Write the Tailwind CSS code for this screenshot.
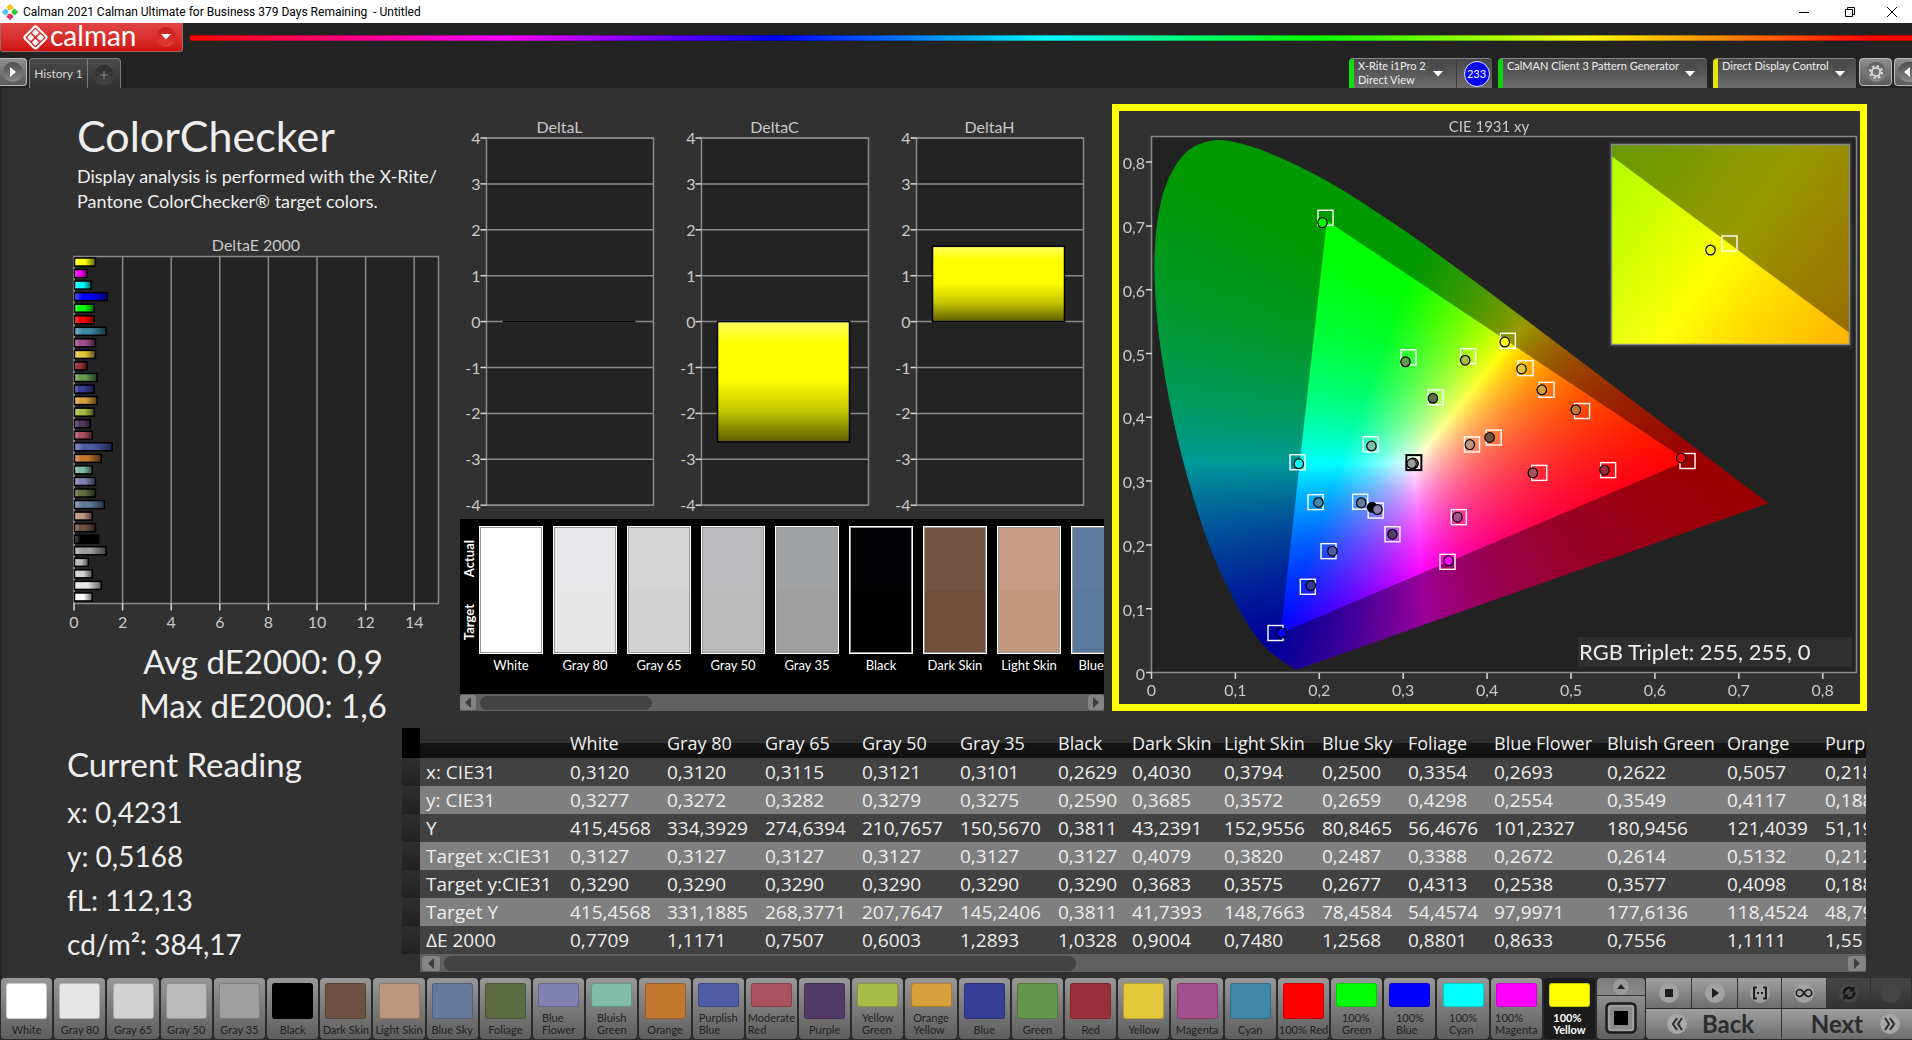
<!DOCTYPE html>
<html lang="en">
<head>
    <meta charset="UTF-8">
    <meta name="viewport" content="width=device-width, initial-scale=1.0">
    <title>Calman 2021 Calman Ultimate for Business 379 Days Remaining - Untitled</title>
    <script src="https://cdn.jsdelivr.net/npm/@tailwindcss/browser@4"></script>
</head>
<body class="min-h-screen flex flex-col overflow-x-hidden bg-[#313131] font-[Lato,sans-serif] text-[#eeeeee]">

    <!-- window title bar -->
    <div class="h-[23px] bg-white text-black flex items-center pl-[2px] shrink-0">
        <svg class="w-4 h-4" viewBox="0 0 16 16">
            <rect x="5.3" y="0.8" width="5.4" height="5.4" rx="1" transform="rotate(45 8 3.5)" fill="#f3c614"/>
            <rect x="0.8" y="5.3" width="5.4" height="5.4" rx="1" transform="rotate(45 3.5 8)" fill="#56c4ee"/>
            <rect x="9.8" y="5.3" width="5.4" height="5.4" rx="1" transform="rotate(45 12.5 8)" fill="#35c435"/>
            <rect x="5.3" y="9.8" width="5.4" height="5.4" rx="1" transform="rotate(45 8 12.5)" fill="#e8305c"/>
            <path d="M8 5.8 10.2 8 8 10.2 5.8 8Z" fill="#fff"/>
        </svg>
        <span class="ml-[5px] text-[12px] font-[Roboto,sans-serif] whitespace-pre">Calman 2021 Calman Ultimate for Business 379 Days Remaining  - Untitled</span>
        <div class="ml-auto flex">
            <button aria-label="Minimize" class="w-[46px] h-[23px] flex items-center justify-center"><svg width="10" height="10"><path d="M0 5.5H10" stroke="#000"/></svg></button>
            <button aria-label="Restore" class="w-[45px] h-[23px] flex items-center justify-center"><svg width="10" height="10" fill="none" stroke="#000"><path d="M.5 2.5h7v7h-7zM2.5 2.5v-2h7v7h-2"/></svg></button>
            <button aria-label="Close" class="w-[40px] h-[23px] flex items-center justify-center"><svg width="10" height="10"><path d="M0 0 10 10M10 0 0 10" stroke="#000"/></svg></button>
        </div>
    </div>

    <header class="bg-[#232323] shrink-0">
        <div class="flex h-[29px]">
            <button class="w-[183px] shrink-0 flex items-center pl-[22px] rounded-b-[3px] border border-t-0 border-[#a06a6a] bg-linear-to-b from-[#e04545] to-[#d01010] text-white">
                <svg class="w-[25px] h-[25px]" viewBox="0 0 24 24" fill="none">
                    <rect x="4" y="4" width="16" height="16" rx="2" transform="rotate(45 12 12)" stroke="#fff" stroke-width="2"/>
                    <g fill="#fff" transform="rotate(45 12 12)">
                        <rect x="6.2" y="6.2" width="5" height="5" rx="1"/><rect x="12.8" y="6.2" width="5" height="5" rx="1"/>
                        <rect x="6.2" y="12.8" width="5" height="5" rx="1"/><rect x="12.8" y="12.8" width="5" height="5" rx="1"/>
                    </g>
                </svg>
                <span class="ml-[2px] text-[28px] leading-[28px] pb-1">calman</span>
                <span class="ml-auto mr-[6px] w-5 h-5 rounded-full bg-linear-to-b from-[#c81c1c] to-[#e03a3a] flex items-center justify-center">
                    <svg width="10" height="6"><path d="M0 0H10L5 5.5Z" fill="#fff"/></svg>
                </span>
            </button>
            <div class="flex-1 pl-[7px] pt-[12px]">
                <div class="h-[6px] border-y border-black/30 bg-[linear-gradient(to_right,#ff0000_0%,#ff00ff_18%,#0000ff_34%,#00ffff_50%,#00ff00_65%,#ffff00_81%,#ff0000_98%)]"></div>
            </div>
        </div>

        <div class="flex items-end pt-[6px]">
            <button aria-label="Expand panel" class="w-[27px] h-[28px] mb-[2px] rounded-r-[4px] border border-l-0 border-[#bdbdbd] bg-linear-to-b from-[#8e8e8e] to-[#5c5c5c] flex items-center justify-center">
                <span class="w-5 h-5 rounded-full bg-linear-to-b from-[#4e4e4e] to-[#8a8a8a] flex items-center justify-center"><svg width="6" height="10"><path d="M0 0V10L6 5Z" fill="#fff"/></svg></span>
            </button>
            <div class="ml-[2px] h-[30px] flex rounded-t-[4px] border border-b-0 border-[#7c7c7c] bg-linear-to-b from-[#4a4a4a] to-[#323232]">
                <button class="w-[58px] text-[12px] text-[#d8d8d8] border-r border-[#7c7c7c]">History 1</button>
                <button aria-label="Add history" class="w-[32px] flex items-center justify-center pt-[3px]">
                    <span class="w-5 h-5 rounded-full bg-linear-to-b from-[#2c2c2c] to-[#464646] flex items-center justify-center"><svg width="8" height="8"><path d="M0 4H8M4 0V8" stroke="#8a8a8a"/></svg></span>
                </button>
            </div>

            <div class="ml-auto flex items-end text-[11px] leading-[14px] text-left">
                <div class="h-[30px] flex rounded-t-[4px] overflow-hidden border-t border-[#888888] bg-linear-to-b from-[#484848] to-[#6c6c6c]">
                    <div class="w-[5px] bg-[#10e010]"></div>
                    <button class="w-[102px] pl-1 flex items-start">
                        <span class="w-[70px] text-left whitespace-nowrap">X-Rite i1Pro 2<br>Direct View</span>
                        <span class="mt-[5px] w-5 h-5 rounded-full bg-linear-to-b from-[#454545] to-[#6a6a6a] flex items-center justify-center"><svg width="10" height="6"><path d="M0 0H10L5 5.5Z" fill="#fff"/></svg></span>
                    </button>
                    <button class="w-[36px] pl-[4px] border-l border-[#3c3c3c] flex items-center justify-center">
                        <span class="w-[26px] h-[26px] rounded-full bg-[#0000f4] border border-[#dfe4ff] flex items-center justify-center text-white">233</span>
                    </button>
                </div>
                <button class="ml-[6px] w-[209px] h-[30px] flex items-start rounded-t-[4px] overflow-hidden border-t border-[#888888] bg-linear-to-b from-[#484848] to-[#6c6c6c]">
                    <span class="w-[5px] h-full bg-[#10d010]"></span>
                    <span class="pl-1 flex-1 text-left whitespace-nowrap">CalMAN Client 3 Pattern Generator</span>
                    <span class="mt-[5px] mr-[7px] w-5 h-5 rounded-full bg-linear-to-b from-[#454545] to-[#6a6a6a] flex items-center justify-center"><svg width="10" height="6"><path d="M0 0H10L5 5.5Z" fill="#fff"/></svg></span>
                </button>
                <button class="ml-[6px] w-[143px] h-[30px] flex items-start rounded-t-[4px] overflow-hidden border-t border-[#888888] bg-linear-to-b from-[#484848] to-[#6c6c6c]">
                    <span class="w-[5px] h-full bg-[#e6e600]"></span>
                    <span class="pl-1 flex-1 text-left whitespace-nowrap">Direct Display Control</span>
                    <span class="mt-[5px] mr-[6px] w-5 h-5 rounded-full bg-linear-to-b from-[#454545] to-[#6a6a6a] flex items-center justify-center"><svg width="10" height="6"><path d="M0 0H10L5 5.5Z" fill="#fff"/></svg></span>
                </button>
                <button aria-label="Settings" class="ml-[3px] mb-[2px] w-[33px] h-[28px] rounded-[4px] border border-[#bdbdbd] bg-linear-to-b from-[#8e8e8e] to-[#5c5c5c] flex items-center justify-center">
                    <span class="w-5 h-5 rounded-full bg-linear-to-b from-[#5c5c5c] to-[#8a8a8a] flex items-center justify-center">
                        <svg width="16" height="16" viewBox="-8 -8 16 16" fill="none" stroke="#dcdcdc">
                            <circle r="4.2" stroke-width="1.8"/>
                            <circle r="6" stroke-width="2" stroke-dasharray="2.35 2.362"/>
                        </svg>
                    </span>
                </button>
                <button aria-label="Collapse panel" class="ml-[2px] mb-[2px] w-[18px] h-[28px] rounded-l-[4px] border border-r-0 border-[#bdbdbd] bg-linear-to-b from-[#8e8e8e] to-[#5c5c5c] flex items-center justify-end">
                    <span class="w-[14px] h-5 rounded-l-full bg-linear-to-b from-[#4e4e4e] to-[#8a8a8a] flex items-center justify-end pr-[2px]"><svg width="6" height="10"><path d="M6 0V10L0 5Z" fill="#fff"/></svg></span>
                </button>
            </div>
        </div>
    </header>

    <main class="flex-1 border-l-2 border-[#262626] bg-[#313131]">
        <div class="pt-4 pl-[64px] pr-[45px] flex items-start">
            <section class="w-[394px] shrink-0">
                <h1 class="pt-2 pl-[11px] text-[43px] leading-[48px]">ColorChecker</h1>
                <p class="mt-1 pl-[11px] text-[18px] leading-[25px] whitespace-nowrap">Display analysis is performed with the X-Rite/<br>Pantone ColorChecker® target colors.</p>
                <svg id="delta-e" class="mt-[22px] w-[380px] block overflow-visible" viewBox="0 0 380 403"></svg>
                <div class="text-[33px] leading-[44px] text-center">
                    <p>Avg dE2000: 0,9</p>
                    <p>Max dE2000: 1,6</p>
                </div>
            </section>

            <section class="flex-[644] min-w-0">
                <svg id="deltas" class="w-full block" viewBox="0 0 644 415"></svg>
                <div class="bg-black h-[175px] flex overflow-hidden pt-[7px] text-white">
                    <div class="w-[19px] shrink-0 h-[128px] flex flex-col-reverse justify-around items-center text-[13px] font-bold">
                        <span class="[writing-mode:vertical-rl] rotate-180">Target</span>
                        <span class="[writing-mode:vertical-rl] rotate-180">Actual</span>
                    </div>
                    <div id="swatches" class="flex gap-[10px] overflow-hidden"></div>
                </div>
                <div class="h-[17px] bg-[#606060] flex items-center">
                    <button aria-label="Scroll left" class="w-4 h-[15px] rounded-[3px] bg-[#848484] flex items-center justify-center"><svg width="6" height="11"><path d="M6 0V11L0 5.5Z" fill="#3c3c3c"/></svg></button>
                    <div class="ml-1 w-[172px] h-[14px] rounded-full bg-[#434343]"></div>
                    <button aria-label="Scroll right" class="ml-auto w-4 h-[15px] rounded-[3px] bg-[#848484] flex items-center justify-center"><svg width="6" height="11"><path d="M0 0V11L6 5.5Z" fill="#3c3c3c"/></svg></button>
                </div>
            </section>

            <section class="ml-2 flex-[741] min-w-0 border-[7px] border-[#ffff00] grid">
                <canvas id="gamut" width="741" height="593" class="w-full col-start-1 row-start-1"></canvas>
                <svg id="cie" class="w-full block col-start-1 row-start-1" viewBox="0 0 741 593"></svg>
            </section>
        </div>

        <div class="mt-px pr-[46px] flex items-start">
            <section class="w-[400px] shrink-0 pl-[65px]">
                <h2 class="pt-4 text-[33px] leading-[40px]">Current Reading</h2>
                <div class="mt-[6px] text-[28px] leading-[44px]">
                    <p>x: 0,4231</p>
                    <p>y: 0,5168</p>
                    <p>fL: 112,13</p>
                    <p>cd/m²: 384,17</p>
                </div>
            </section>
            <section class="flex-1 min-w-0">
                <div class="overflow-hidden">
                    <table class="table-fixed w-[1520px] border-collapse text-left whitespace-nowrap font-['Open_Sans',sans-serif]">
                        <colgroup>
                            <col class="w-[18px]"><col class="w-[144px]">
                            <col class="w-[97px]"><col class="w-[98px]"><col class="w-[97px]"><col class="w-[98px]"><col class="w-[98px]">
                            <col class="w-[74px]"><col class="w-[92px]"><col class="w-[98px]"><col class="w-[86px]"><col class="w-[86px]">
                            <col class="w-[113px]"><col class="w-[120px]"><col class="w-[98px]"><col>
                        </colgroup>
                        <thead><tr id="readings-head" class="h-[30px]"></tr></thead>
                        <tbody id="readings"></tbody>
                    </table>
                </div>
                <div class="ml-[18px] h-[18px] bg-[#606060] flex items-center">
                    <button aria-label="Scroll left" class="ml-[2px] w-[18px] h-[15px] rounded-[3px] bg-[#848484] flex items-center justify-center"><svg width="6" height="11"><path d="M6 0V11L0 5.5Z" fill="#3c3c3c"/></svg></button>
                    <div class="ml-1 w-[632px] h-[15px] rounded-full bg-[#434343]"></div>
                    <button aria-label="Scroll right" class="ml-auto w-[18px] h-[15px] rounded-[3px] bg-[#848484] flex items-center justify-center"><svg width="6" height="11"><path d="M0 0V11L6 5.5Z" fill="#3c3c3c"/></svg></button>
                </div>
            </section>
        </div>
    </main>

    <footer class="h-[62px] shrink-0 flex bg-[#2a2a2a] pb-px">
        <div id="patches" class="flex-1 min-w-0 flex pl-px gap-[2px] text-[11px] leading-[12px] text-[#222222]"></div>
        <div class="ml-[2px] w-[48px] flex flex-col">
            <button aria-label="Up" class="h-[18px] rounded-t-[4px] bg-linear-to-b from-[#7c7c7c] to-[#8a8a8a] flex items-center justify-center border-b border-[#333333]">
                <span class="w-4 h-4 rounded-full bg-[#9a9a9a] flex items-center justify-center"><svg width="8" height="5"><path d="M0 5H8L4 0Z" fill="#222"/></svg></span>
            </button>
            <button aria-label="Pattern window" class="flex-1 rounded-b-[4px] bg-linear-to-b from-[#8e8e8e] to-[#606060] flex items-center justify-center">
                <svg width="32" height="32"><rect x="1.5" y="1.5" width="29" height="29" rx="4" fill="#8a8a8a" stroke="#1c1c1c" stroke-width="2.5"/><rect x="4" y="4" width="24" height="24" rx="2" fill="none" stroke="#b4b4b4"/><rect x="9" y="9" width="14" height="14" fill="#000"/></svg>
            </button>
        </div>
        <div class="ml-px w-[266px] flex flex-col gap-px">
            <div class="h-[30px] grid grid-cols-[46px_46px_44px_45px_44px_41px] *:flex *:items-center *:justify-center *:border-r *:border-[#333333]">
                <button aria-label="Stop" class="bg-linear-to-b from-[#a0a0a0] to-[#6e6e6e]"><svg width="22" height="22" viewBox="-11 -11 22 22"><circle r="10" fill="#a2a2a2"/><path d="M-4-4h8v8h-8z" fill="#1c1c1c"/></svg></button>
                <button aria-label="Play" class="bg-linear-to-b from-[#a0a0a0] to-[#6e6e6e]"><svg width="22" height="22" viewBox="-11 -11 22 22"><circle r="10" fill="#a2a2a2"/><path d="M-3-5v10l7-5z" fill="#1c1c1c"/></svg></button>
                <button aria-label="Read series" class="bg-linear-to-b from-[#a0a0a0] to-[#6e6e6e]"><svg width="22" height="22" viewBox="-11 -11 22 22"><circle r="10" fill="#a2a2a2"/><path d="M-3-5.5h-3v11h3M3-5.5h3v11h-3M-3 0h2M1 0h2" fill="none" stroke="#1c1c1c" stroke-width="2"/></svg></button>
                <button aria-label="Read continuous" class="bg-linear-to-b from-[#a0a0a0] to-[#6e6e6e]"><svg width="22" height="22" viewBox="-11 -11 22 22"><circle r="10" fill="#a2a2a2"/><path d="M0 0C-2-3-3-3.5-4.2-3.5a3.4 3.4 0 0 0 0 7C-3 3.5-2 3 0 0S3-3.5 4.2-3.5a3.4 3.4 0 0 1 0 7C3 3.5 2 3 0 0Z" fill="none" stroke="#1c1c1c" stroke-width="1.6"/></svg></button>
                <button aria-label="Refresh" class="bg-linear-to-b from-[#474747] to-[#333333]"><svg width="22" height="22" viewBox="-11 -11 22 22"><circle r="10" fill="#474747"/><path d="M-5 1a5 5 0 0 1 8-5M5-1a5 5 0 0 1-8 5" fill="none" stroke="#141414" stroke-width="2.4"/><path d="M5.5-7v5.5H0zM-5.5 7V1.5H0z" fill="#141414"/></svg></button>
                <button aria-label="Unused" class="bg-linear-to-b from-[#474747] to-[#333333]"><svg width="22" height="22" viewBox="-11 -11 22 22"><circle r="10" fill="#454545"/></svg></button>
            </div>
            <div class="flex-1 grid grid-cols-[136px_1fr] text-[24px] leading-none text-[#2c2c2c] font-bold">
                <button class="rounded-bl-[4px] border-r border-[#333333] bg-linear-to-b from-[#a0a0a0] to-[#6e6e6e] flex items-center pl-5 gap-[14px]"><svg width="22" height="22" viewBox="-11 -11 22 22"><circle r="10" fill="#a8a8a8"/><path d="M0-6-4 0 0 6M5-6 1 0 5 6" fill="none" stroke="#2c2c2c" stroke-width="2"/></svg>Back</button>
                <button class="bg-linear-to-b from-[#a0a0a0] to-[#6e6e6e] flex items-center justify-end pr-[11px] gap-[16px]">Next<svg width="22" height="22" viewBox="-11 -11 22 22"><circle r="10" fill="#a8a8a8"/><path d="M0-6 4 0 0 6M-5-6-1 0-5 6" fill="none" stroke="#2c2c2c" stroke-width="2"/></svg></button>
            </div>
        </div>
    </footer>

    <script>
        // name, colour, dE2000, target xy, measured xy
        const patches = [
            ['White', '#ffffff', 0.73, [.3127, .3290], [.3120, .3277]],
            ['Gray 80', '#e6e6e6', 1.10, null, [.3120, .3272]],
            ['Gray 65', '#d2d2d2', 0.73, null, [.3115, .3282]],
            ['Gray 50', '#bababa', 0.57, null, [.3121, .3279]],
            ['Gray 35', '#9f9f9f', 1.30, null, [.3101, .3275]],
            ['Black', '#000000', 0.99, null, [.2629, .2590]],
            ['Dark Skin', '#6e5142', 0.86, [.4079, .3683], [.4030, .3685]],
            ['Light Skin', '#bd9680', 0.73, [.3820, .3575], [.3794, .3572]],
            ['Blue Sky', '#637b9b', 1.23, [.2487, .2677], [.2500, .2659]],
            ['Foliage', '#5d6b42', 0.86, [.3388, .4313], [.3354, .4298]],
            ['Blue<br>Flower', '#8180b1', 0.86, [.2672, .2538], [.2693, .2554]],
            ['Bluish<br>Green', '#81bca9', 0.73, [.2614, .3577], [.2622, .3549]],
            ['Orange', '#c37630', 1.10, [.5132, .4098], [.5057, .4117]],
            ['Purplish<br>Blue', '#4e5ba5', 1.55, [.2110, .1902], [.2156, .1902]],
            ['Moderate<br>Red', '#ab5160', 0.73, [.4621, .3129], [.4545, .3129]],
            ['Purple', '#533b68', 0.65, [.2872, .2168], [.2872, .2168]],
            ['Yellow<br>Green', '#a8bd48', 0.81, [.3774, .4957], [.3739, .4895]],
            ['Orange<br>Yellow', '#d6a13a', 0.93, [.4708, .4431], [.4652, .4431]],
            ['Blue', '#363d94', 0.81, [.1863, .1344], [.1899, .1363]],
            ['Green', '#64964c', 0.93, [.3063, .4939], [.3027, .4870]],
            ['Red', '#9a2f39', 0.52, [.5443, .3172], [.5399, .3172]],
            ['Yellow', '#e2c83a', 0.86, [.4458, .4771], [.4410, .4759]],
            ['Magenta', '#a2518f', 0.86, [.3663, .2435], [.3647, .2435]],
            ['Cyan', '#3e88a7', 1.30, [.1955, .2670], [.1990, .2665]],
            ['100% Red', '#ff0000', 0.81, [.6389, .3315], [.6313, .3364]],
            ['100%<br>Green', '#00ff00', 0.81, [.2074, .7127], [.2038, .7052]],
            ['100%<br>Blue', '#0000ff', 1.35, [.1478, .0619], [.1550, .0619]],
            ['100%<br>Cyan', '#00ffff', 0.68, [.1740, .3296], [.1756, .3271]],
            ['100%<br>Magenta', '#ff00ff', 0.52, [.3528, .1735], [.3540, .1753]],
            ['100%<br>Yellow', '#ffff00', 0.86, [.4247, .5199], [.4211, .5180]],
        ];

        // ---- pattern buttons along the bottom
        document.getElementById('patches').innerHTML = patches.map(([name, color], i) => {
            const active = i === patches.length - 1;
            const two = name.includes('<br>');
            return `<button class="flex-1 min-w-0 pt-[5px] pb-[3px] rounded-[4px] flex flex-col items-center justify-between whitespace-nowrap overflow-hidden ${active ? 'bg-[#1c1c1c] text-white font-bold' : 'bg-linear-to-b from-[#989898] to-[#5e5e5e]'}">
                <span class="w-[41px] rounded-[3px] border border-black/20 ${two ? 'h-6' : 'h-[36px]'}" style="background:${color}"></span>
                <span class="text-left">${name}</span>
            </button>`;
        }).join('');

        // ---- actual / target swatches
        const swatches = [
            ['White', '#ffffff', '#ffffff'], ['Gray 80', '#e7e7e9', '#e6e6e6'], ['Gray 65', '#d5d5d5', '#d2d2d2'],
            ['Gray 50', '#bcbcbe', '#bababa'], ['Gray 35', '#a1a2a4', '#9f9f9f'], ['Black', '#020205', '#000000'],
            ['Dark Skin', '#735440', '#714f3b'], ['Light Skin', '#c79b85', '#c4977f'], ['Blue Sky', '#5f7b9e', '#5b799d'],
        ];
        document.getElementById('swatches').innerHTML = swatches.map(([name, actual, target]) => `
            <div class="w-[64px] shrink-0 text-center text-[13px] leading-5 whitespace-nowrap">
                <div class="h-[128px] border border-white p-px bg-[#9a9a9a]">
                    <div class="h-1/2" style="background:${actual}"></div>
                    <div class="h-1/2" style="background:${target}"></div>
                </div>
                <div class="mt-px">${name}</div>
            </div>`).join('');

        // ---- readings table
        const columns = ['', 'White', 'Gray 80', 'Gray 65', 'Gray 50', 'Gray 35', 'Black', 'Dark Skin', 'Light Skin', 'Blue Sky', 'Foliage', 'Blue Flower', 'Bluish Green', 'Orange', 'Purplish Blue'];
        const rows = [
            ['x: CIE31', '0,3120', '0,3120', '0,3115', '0,3121', '0,3101', '0,2629', '0,4030', '0,3794', '0,2500', '0,3354', '0,2693', '0,2622', '0,5057', '0,2183'],
            ['y: CIE31', '0,3277', '0,3272', '0,3282', '0,3279', '0,3275', '0,2590', '0,3685', '0,3572', '0,2659', '0,4298', '0,2554', '0,3549', '0,4117', '0,1880'],
            ['Y', '415,4568', '334,3929', '274,6394', '210,7657', '150,5670', '0,3811', '43,2391', '152,9556', '80,8465', '56,4676', '101,2327', '180,9456', '121,4039', '51,1902'],
            ['Target x:CIE31', '0,3127', '0,3127', '0,3127', '0,3127', '0,3127', '0,3127', '0,4079', '0,3820', '0,2487', '0,3388', '0,2672', '0,2614', '0,5132', '0,2120'],
            ['Target y:CIE31', '0,3290', '0,3290', '0,3290', '0,3290', '0,3290', '0,3290', '0,3683', '0,3575', '0,2677', '0,4313', '0,2538', '0,3577', '0,4098', '0,1880'],
            ['Target Y', '415,4568', '331,1885', '268,3771', '207,7647', '145,2406', '0,3811', '41,7393', '148,7663', '78,4584', '54,4574', '97,9971', '177,6136', '118,4524', '48,7902'],
            ['ΔE 2000', '0,7709', '1,1171', '0,7507', '0,6003', '1,2893', '1,0328', '0,9004', '0,7480', '1,2568', '0,8801', '0,8633', '0,7556', '1,1111', '1,55'],
        ];
        document.getElementById('readings-head').innerHTML = '<td class="bg-black"></td>' + columns.map(c =>
            `<th scope="col" class="p-0 pl-[6px] font-normal text-[18px] leading-none bg-[linear-gradient(#2f2f2f_50%,#161616_50%,#101010)]">${c}</th>`).join('');
        document.getElementById('readings').innerHTML = rows.map((r, i) => `
            <tr class="h-[28px] text-[19px] leading-none ${i % 2 ? 'bg-[#7f7f7f]' : 'bg-[#414141]'}">
                <td class="p-0 bg-linear-to-b from-[#2e2e2e] to-[#222222]"></td>
                <th scope="row" class="p-0 pl-[6px] font-normal">${r[0]}</th>
                ${r.slice(1).map(v => `<td class="p-0 pl-[6px]">${v}</td>`).join('')}
            </tr>`).join('');

        // ---- DeltaE bar chart
        const W = 364.5, X0 = 8, Y0 = 20.5, H = 347;
        let s = `<defs><linearGradient id="shade-x"><stop offset="0" stop-color="#fff" stop-opacity=".35"/><stop offset=".25" stop-color="#fff" stop-opacity="0"/><stop offset=".5" stop-opacity="0"/><stop offset="1" stop-opacity=".6"/></linearGradient></defs>
            <text x="190" y="15" text-anchor="middle" font-size="16" fill="#c9c9c9">DeltaE 2000</text>
            <rect x="${X0}" y="${Y0}" width="${W}" height="${H}" fill="#232323" stroke="#8a8a8a" stroke-width="1.5"/>`;
        for (let v = 0; v <= 14; v += 2) {
            const x = X0 + v * 24.3;
            s += `<path d="M${x} ${Y0}V${Y0 + H}" stroke="#8a8a8a" stroke-width="1.5"/><path d="M${x} ${Y0 + H}v7" stroke="#d8d8d8" stroke-width="1.5"/>
                <text x="${x}" y="${Y0 + H + 24}" text-anchor="middle" font-size="16" fill="#c9c9c9">${v}</text>`;
        }
        patches.slice().reverse().forEach(([, color, de], i) => {
            const y = 22 + i * 11.55, w = de * 24.3;
            s += `<rect x="${X0 + .5}" y="${y}" width="${w}" height="8" fill="${color}"/><rect x="${X0 + .5}" y="${y}" width="${w}" height="8" fill="url(#shade-x)" stroke="#000" stroke-width="1.5"/>`;
        });
        document.getElementById('delta-e').innerHTML = s;

        // ---- DeltaL / DeltaC / DeltaH
        s = `<defs><linearGradient id="shade-y" x2="0" y2="1"><stop offset="0" stop-color="#ffff60"/><stop offset=".18" stop-color="#ffff00"/><stop offset=".48" stop-color="#ffff00"/><stop offset=".75" stop-color="#c4c400"/><stop offset="1" stop-color="#5c5c00"/></linearGradient></defs>`;
        [['DeltaL', 0], ['DeltaC', -2.62], ['DeltaH', 1.64]].forEach(([name, value], n) => {
            const x = 26.5 + n * 215, top = 34, step = 45.9, zero = top + 4 * step;
            s += `<text x="${x + 73}" y="${top - 5}" text-anchor="middle" font-size="16" fill="#c9c9c9">${name}</text>
                <rect x="${x}" y="${top}" width="167" height="${8 * step}" fill="#232323" stroke="#8a8a8a" stroke-width="1.5"/>`;
            for (let i = 0; i <= 8; i++) {
                const y = top + i * step;
                s += `<path d="M${x} ${y}h167" stroke="#8a8a8a" stroke-width="1.5"/><path d="M${x - 6} ${y}h6" stroke="#d8d8d8" stroke-width="1.5"/>
                    <text x="${x - 6}" y="${y + 6}" text-anchor="end" font-size="16" fill="#c9c9c9">${4 - i}</text>`;
            }
            if (value) {
                s += `<rect x="${x + 16}" y="${value > 0 ? zero - value * step : zero}" width="132" height="${Math.abs(value) * step}" fill="url(#shade-y)" stroke="#000" stroke-width="1.5"/>`;
            } else {
                s += `<path d="M${x + 16} ${zero}h133" stroke="#000" stroke-width="1.5"/>`;
            }
        });
        document.getElementById('deltas').innerHTML = s;

        // ---- CIE 1931 xy
        const px = x => 32.5 + x * 839, py = y => 561.5 - y * 638;
        const locus = [[.1741, .0050], [.1714, .0051], [.1644, .0109], [.1566, .0177], [.1440, .0297], [.1355, .0399], [.1241, .0578], [.1096, .0868], [.0913, .1327], [.0687, .2007],
            [.0454, .2950], [.0235, .4127], [.0082, .5384], [.0039, .6548], [.0139, .7502], [.0389, .8120], [.0743, .8338], [.1142, .8262], [.1547, .8059], [.1929, .7816], [.2296, .7543],
            [.3016, .6923], [.3731, .6245], [.4441, .5547], [.5125, .4866], [.5752, .4242], [.6270, .3725], [.6915, .3083], [.7347, .2653]];
        const inset = { x: 492.5, y: 33.5, w: 238, h: 200, cx: .4271, cy: .5181, sx: 4500, sy: 3700 };

        function chromaticityColor(x, y) {
            const X = x / y, Z = (1 - x - y) / y;
            const rgb = [3.2406 * X - 1.5372 - .4986 * Z, -.9689 * X + 1.8758 + .0415 * Z, .0557 * X - .2040 + 1.0570 * Z].map(v => Math.max(v, 0));
            const max = Math.max(...rgb);
            return rgb.map(v => 255 * v / max);
        }

        function colorField(w, h, toX, toY) {
            const c = document.createElement('canvas');
            c.width = w;
            c.height = h;
            const g = c.getContext('2d'), img = g.createImageData(w, h);
            for (let j = 0; j < h; j++) {
                for (let i = 0; i < w; i++) {
                    const [r, gr, b] = chromaticityColor(toX(i), Math.max(toY(j), .001));
                    img.data.set([r, gr, b, 255], (j * w + i) * 4);
                }
            }
            g.putImageData(img, 0, 0);
            return c;
        }

        const ctx = document.getElementById('gamut').getContext('2d');
        ctx.fillStyle = '#232323';
        ctx.fillRect(33, 25, 705, 536);

        // Catmull-Rom through the locus points
        ctx.save();
        ctx.beginPath();
        const pts = locus.map(([x, y]) => [px(x), py(y)]);
        ctx.moveTo(...pts[0]);
        for (let i = 0; i < pts.length - 1; i++) {
            const p0 = pts[i - 1] || pts[i], p1 = pts[i], p2 = pts[i + 1], p3 = pts[i + 2] || p2;
            ctx.bezierCurveTo(
                p1[0] + (p2[0] - p0[0]) / 6, p1[1] + (p2[1] - p0[1]) / 6,
                p2[0] - (p3[0] - p1[0]) / 6, p2[1] - (p3[1] - p1[1]) / 6,
                p2[0], p2[1]);
        }
        ctx.closePath();
        ctx.clip();
        ctx.drawImage(colorField(741, 593, i => (i - 32.5) / 839, j => (561.5 - j) / 638), 0, 0);
        ctx.beginPath();
        ctx.rect(0, 0, 741, 593);
        [[.209, .708], [.638, .332], [.154, .062]].forEach(([x, y], i) => i ? ctx.lineTo(px(x), py(y)) : ctx.moveTo(px(x), py(y)));
        ctx.closePath();
        ctx.fillStyle = 'rgba(0,0,0,.4)';
        ctx.fill('evenodd');
        ctx.restore();

        const mx = inset.x + inset.w / 2, my = inset.y + inset.h / 2;
        ctx.fillStyle = '#2e2e2e';
        ctx.fillRect(inset.x - 3, inset.y - 3, inset.w + 6, inset.h + 6);
        ctx.drawImage(colorField(inset.w, inset.h, i => inset.cx + (i - inset.w / 2) / inset.sx, j => inset.cy - (j - inset.h / 2) / inset.sy), inset.x, inset.y);
        ctx.beginPath();
        ctx.moveTo(inset.x, my - inset.w / 2 * .743);
        ctx.lineTo(inset.x, inset.y);
        ctx.lineTo(inset.x + inset.w, inset.y);
        ctx.lineTo(inset.x + inset.w, my + inset.w / 2 * .743);
        ctx.fillStyle = 'rgba(0,0,0,.4)';
        ctx.fill();

        s = `<text x="370" y="21" text-anchor="middle" font-size="15" fill="#c9c9c9">CIE 1931 xy</text>
            <rect x="32.5" y="25.5" width="705" height="536" fill="none" stroke="#8a8a8a" stroke-width="1.5"/>
            <rect x="${inset.x}" y="${inset.y}" width="${inset.w}" height="${inset.h}" fill="none" stroke="#8a8a8a" stroke-width="1.5"/>`;
        for (let i = 0; i <= 8; i++) {
            const label = i ? '0,' + i : '0';
            s += `<path d="M${px(i / 10)} 562v6M33 ${py(i / 10)}h-6" stroke="#d8d8d8" stroke-width="1.5"/>
                <text x="${px(i / 10)}" y="585" text-anchor="middle" font-size="16" fill="#c9c9c9">${label}</text>
                <text x="26" y="${py(i / 10) + 7}" text-anchor="end" font-size="16" fill="#c9c9c9">${label}</text>`;
        }
        const square = (x, y, c, w) => `<rect x="${x - 7.5}" y="${y - 7.5}" width="15" height="15" fill="none" stroke="${c}" stroke-width="${w}"/>`;
        const dot = (x, y, c) => `<ellipse cx="${x}" cy="${y}" rx="4.7" ry="4.9" fill="${c}" stroke="#000" stroke-width="1.2"/>`;
        patches.forEach(([name, , , t]) => { if (t) s += square(px(t[0]), py(t[1]), name === 'White' ? '#000' : '#fff', name === 'White' ? 2 : 1.4); });
        patches.forEach(([, color, , , m]) => { s += dot(px(m[0]), py(m[1]), color); });
        s += square(mx - 1, my - 1, '#fff', 1.4) + dot(mx - 20, my + 5.5, 'none');
        s += `<rect x="459" y="526" width="274" height="30" fill="#2f2f2f"/><text x="460" y="549" font-size="22" fill="#eee">RGB Triplet: 255, 255, 0</text>`;
        document.getElementById('cie').innerHTML = s;
    </script>
</body>
</html>
